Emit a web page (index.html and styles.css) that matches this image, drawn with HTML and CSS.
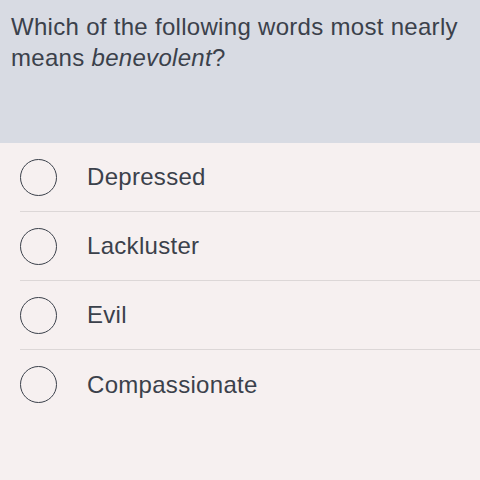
FILE: index.html
```html
<!DOCTYPE html>
<html>
<head>
<meta charset="utf-8">
<link rel="stylesheet" href="styles.css">
</head>
<body>
<div class="question">
  <p class="qtext">Which of the following words most nearly means <em>benevolent</em>?</p>
</div>
<ul class="options">
  <li class="option"><span class="radio"></span><span class="label">Depressed</span></li>
  <li class="option"><span class="radio"></span><span class="label">Lackluster</span></li>
  <li class="option"><span class="radio"></span><span class="label">Evil</span></li>
  <li class="option"><span class="radio"></span><span class="label">Compassionate</span></li>
</ul>
</body>
</html>
```
FILE: styles.css
```css
html, body {
  margin: 0;
  padding: 0;
  height: 100%;
}
body {
  background: #f6f0f0;
  font-family: "Liberation Sans", Arial, sans-serif;
  color: #3b414b;
}
.question {
  background: #d8dbe3;
  height: 143px;
  box-sizing: border-box;
  padding: 11px 11px 0 11px;
}
.qtext {
  margin: 0;
  font-size: 24px;
  line-height: 31px;
  letter-spacing: 0.3px;
}
.qtext em {
  font-style: italic;
}
.options {
  list-style: none;
  margin: 0;
  padding: 0;
}
.option {
  margin-left: 20px;
  height: 69px;
  box-sizing: border-box;
  display: flex;
  align-items: center;
  border-bottom: 1px solid #dcd7d7;
}
.option:last-child {
  border-bottom: none;
}
.radio {
  width: 37px;
  height: 37px;
  box-sizing: border-box;
  border: 1.5px solid #3b414b;
  border-radius: 50%;
  flex: none;
}
.label {
  margin-left: 30px;
  font-size: 24px;
  letter-spacing: 0.3px;
}
```
